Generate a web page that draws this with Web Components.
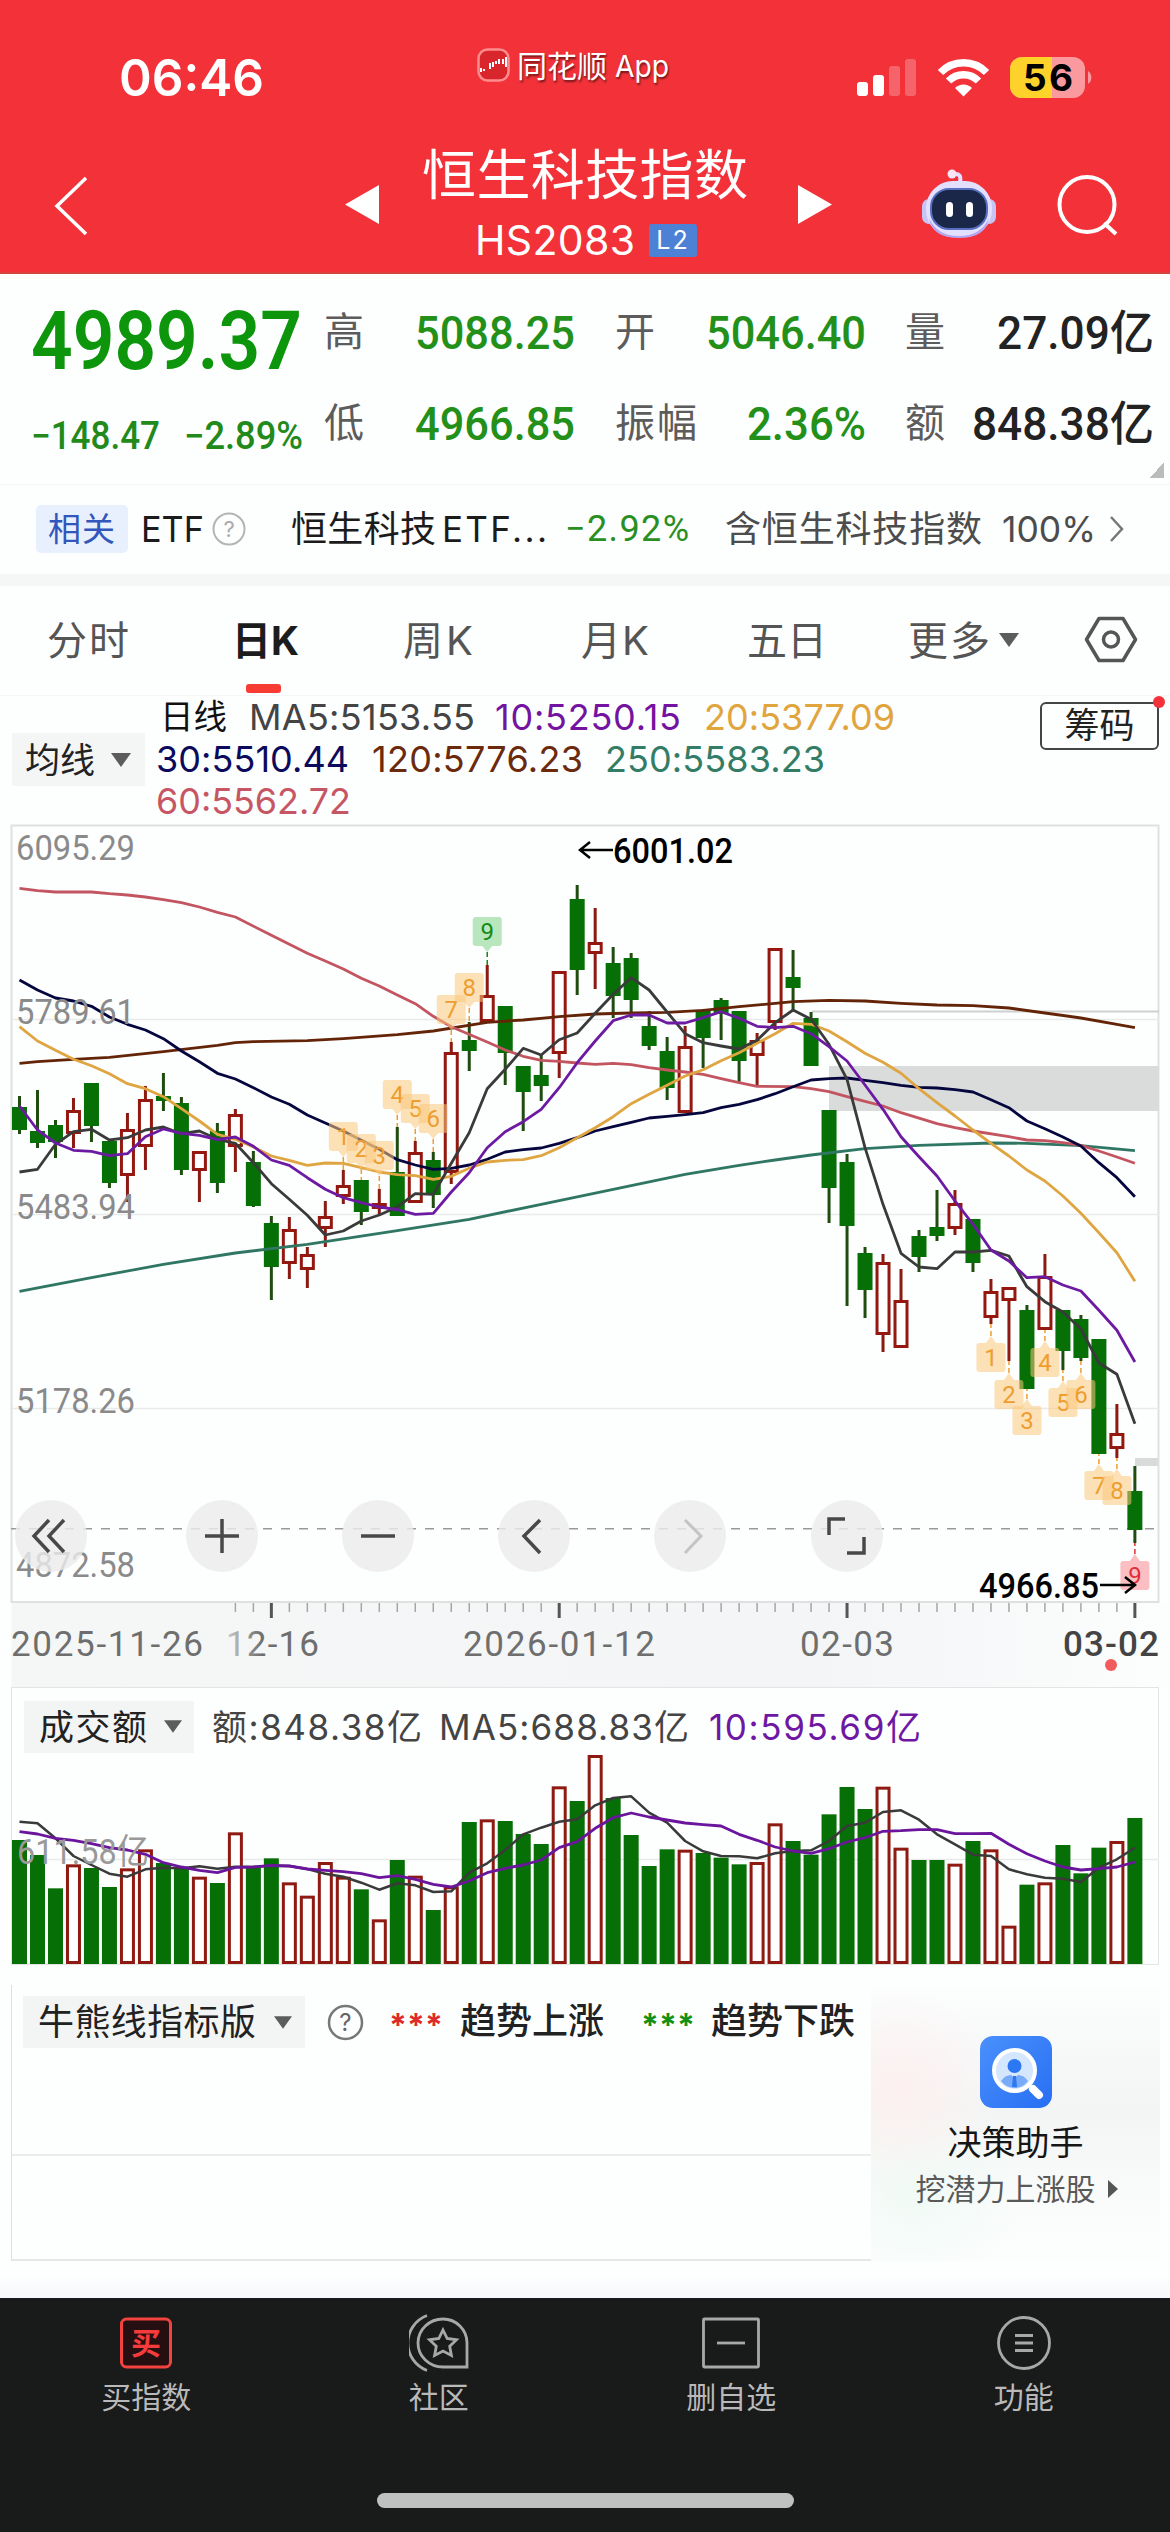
<!DOCTYPE html>
<html lang="zh-CN">
<head>
<meta charset="utf-8">
<title>恒生科技指数</title>
<style>
    body{
        margin: 0;
        background: #fdfefe;
        font-family: 'Inter', 'Noto Sans CJK SC', sans-serif;
        color: #222;
    }
</style>
</head>
<body>
<stock-page></stock-page>

<script>
const NUM = "'Roboto', 'Noto Sans CJK SC', sans-serif"

// text fitted to a given width: spaced out when short, narrowed when long
class FitText extends HTMLElement {
    constructor() {
        super()
        this.attachShadow({ mode: 'open' })
        this.shadowRoot.innerHTML = `
            <style>
                :host{ display: block; flex: none; white-space: nowrap; }
                span{ display: inline-block; transform-origin: 0 50%; }
            </style>
            <span><slot></slot></span>`
    }
    connectedCallback() {
        const w = Number(this.getAttribute('w'))
        const span = this.shadowRoot.querySelector('span')
        const n = this.textContent.length - 1
        const natural = span.getBoundingClientRect().width
        this.style.width = w + 'px'
        if (natural > w) span.style.transform = `scaleX(${w / natural})`
        else if (n > 0) span.style.letterSpacing = (w - natural) / n + 'px'
    }
}

class StatusBar extends HTMLElement {
    constructor() {
        super()
        this.attachShadow({ mode: 'open' })
        this.shadowRoot.innerHTML = `
            <style>
                :host{ display: flex; height: 130px; color: #fff; }
                .time{ margin: 48px 0 0 119px; font-size: 51px; line-height: 60px; font-weight: 600; }
                .mark{ display: flex; margin: 46px 0 0 213px; height: 40px; font-size: 30px; line-height: 40px; text-shadow: 1px 2px 2px #0008; }
                .mark svg{ margin: 2px 7px 0 0; }
                .mark .app{ margin-left: 8px; }
                .signal{ margin: 57px 0 0 187px; overflow: visible; }
            </style>
            <fit-text class="time" w="145">06:46</fit-text>
            <div class="mark">
                <svg width="33" height="34" viewBox="0 0 33 34">
                    <rect x="1.5" y="1.5" width="30" height="31" rx="9" fill="#d9262c" stroke="#ff8d8d" stroke-width="2.5"/>
                    <path d="M4 24v-4M7 23v-2M13 15v6M16 14v5M19 16v-3M22 16v-5M26 11v5M29 9v10" stroke="#fff" stroke-width="2"/>
                </svg>
                <fit-text w="90">同花顺</fit-text>
                <fit-text class="app" w="54">App</fit-text>
            </div>
            <svg class="signal" width="240" height="44" viewBox="0 0 240 44">
                <g fill="#fff">
                    <rect x="1" y="25" width="11" height="14" rx="3"/>
                    <rect x="17" y="18" width="11" height="21" rx="3"/>
                    <rect x="33" y="9" width="11" height="30" rx="3" opacity=".25"/>
                    <rect x="49" y="2" width="11" height="37" rx="3" opacity=".25"/>
                </g>
                <g fill="none" stroke="#fff" stroke-width="7.5">
                    <path d="M84.500 15.500a32 32 0 0 1 46 0"/>
                    <path d="M92.500 24a21 21 0 0 1 30 0"/>
                </g>
                <path d="M99 31a12 12 0 0 1 17 0l-8.500 8.500z" fill="#fff"/>
                <clipPath id="b"><rect x="154" y="0" width="75" height="41" rx="12"/></clipPath>
                <g clip-path="url(#b)">
                    <rect x="154" y="0" width="75" height="41" fill="#fb9a9e"/>
                    <rect x="154" y="0" width="42" height="41" fill="#fdd32b"/>
                </g>
                <path d="M232 14a8 8 0 0 1 0 13z" fill="#fb9a9e"/>
                <text x="167" y="34" font-size="37" font-weight="700" textLength="50">56</text>
            </svg>`
    }
}

class NavBar extends HTMLElement {
    constructor() {
        super()
        this.attachShadow({ mode: 'open' })
        this.shadowRoot.innerHTML = `
            <style>
                :host{ display: flex; height: 142px; color: #fff; }
                .title{ width: 330px; margin-left: 42px; }
                .name{ font-size: 54px; line-height: 80px; margin-top: 6px; }
                .code{ display: flex; height: 40px; margin: 4px 0 0 53px; font-size: 41px; line-height: 40px; align-items: center; }
                .l2{ width: 48px; height: 33px; margin-left: 14px; background: #4c81d6; border-radius: 3px; font-size: 25px; line-height: 33px; text-align: center; letter-spacing: 2px; }
                svg{ flex: none; }
            </style>
            <svg style="margin: 45px 0 0 52px" width="38" height="62" viewBox="0 0 38 62"><path d="M34 3 5 31l29 28" fill="none" stroke="#fff" stroke-width="3.500"/></svg>
            <svg style="margin: 54px 0 0 255px" width="35" height="42" viewBox="0 0 35 42"><path d="M34 1v39L0 20.500z" fill="#fff"/></svg>
            <div class="title">
                <fit-text class="name" w="326">恒生科技指数</fit-text>
                <div class="code"><fit-text w="160">HS2083</fit-text><div class="l2">L2</div></div>
            </div>
            <svg style="margin: 54px 0 0 46px" width="35" height="42" viewBox="0 0 35 42"><path d="M0 1v39l34-19.500z" fill="#fff"/></svg>
            <svg style="margin: 38px 0 0 88px" width="76" height="72" viewBox="0 0 76 72">
                <path d="M39 14q2-9-6-8" fill="none" stroke="#e5e0ff" stroke-width="4"/>
                <circle cx="31" cy="6" r="4.500" fill="#f8e6f4"/>
                <rect x="1" y="31" width="14" height="25" rx="7" fill="#c6c4f4"/>
                <rect x="61" y="31" width="14" height="25" rx="7" fill="#c6c4f4"/>
                <rect x="5" y="13" width="66" height="56" rx="27" fill="#e3e0ff"/>
                <path d="M8 50q8 18 30 18t30-18q-3 20-30 20T8 50" fill="#b5a6f2"/>
                <rect x="10" y="21" width="56" height="40" rx="18" fill="#1b2748" stroke="#566fc0" stroke-width="2"/>
                <rect x="25" y="34" width="7" height="15" rx="3.500" fill="#fff"/>
                <rect x="45" y="34" width="7" height="15" rx="3.500" fill="#fff"/>
            </svg>
            <svg style="margin: 44px 0 0 60px" width="64" height="64" viewBox="0 0 64 64"><circle cx="30" cy="30.500" r="27.500" fill="none" stroke="#fff" stroke-width="4"/><path d="m47 49 12 11" stroke="#fff" stroke-width="4"/></svg>`
    }
}

class QuotePanel extends HTMLElement {
    constructor() {
        super()
        this.attachShadow({ mode: 'open' })
        this.shadowRoot.innerHTML = `
            <style>
                :host{ display: flex; height: 210px; border-top: 2px solid #d7423f; border-bottom: 1px solid #f4f6f6; font-family: ${NUM}; }
                .main{ width: 270px; margin-left: 31px; color: #0d960c; }
                .price{ font-size: 82px; line-height: 96px; font-weight: 600; margin-top: 19px; }
                .chg{ display: flex; gap: 24px; margin-top: 25px; font-size: 38px; line-height: 44px; font-weight: 500; color: #22891b; }
                .grid{
                    display: grid;
                    flex: 1;
                    grid-template-columns: 251px 40px 249px 41px 249px;
                    grid-template-rows: 91px 91px;
                    margin: 13px 0 0 23px;
                }
                .cell{ display: flex; justify-content: space-between; align-items: center; grid-column: span 2; width: 251px; }
                .cell.last{ grid-column: auto; width: 249px; }
                .cell fit-text{ font-size: 47px; line-height: 60px; font-weight: 500; color: #23901a; }
                .cell .l{ font-size: 40px; font-weight: 400; color: #5c5c5c; }
                .cell .d{ color: #222; }
                .fold{ width: 14px; height: 16px; align-self: flex-end; margin: 0 6px 6px -26px; background: linear-gradient(to bottom right, #0000 50%, #bbb 50%); }
            </style>
            <div class="main">
                <fit-text class="price" w="271">4989.37</fit-text>
                <div class="chg"><fit-text w="129">−148.47</fit-text><fit-text w="119">−2.89%</fit-text></div>
            </div>
            <div class="grid">
                <div class="cell"><fit-text class="l" w="40">高</fit-text><fit-text w="160">5088.25</fit-text></div>
                <div class="cell"><fit-text class="l" w="40">开</fit-text><fit-text w="160">5046.40</fit-text></div>
                <div class="cell last"><fit-text class="l" w="40">量</fit-text><fit-text class="d" w="157">27.09亿</fit-text></div>
                <div class="cell"><fit-text class="l" w="40">低</fit-text><fit-text w="160">4966.85</fit-text></div>
                <div class="cell"><fit-text class="l" w="82">振幅</fit-text><fit-text w="119">2.36%</fit-text></div>
                <div class="cell last"><fit-text class="l" w="40">额</fit-text><fit-text class="d" w="182">848.38亿</fit-text></div>
            </div>
            <div class="fold"></div>`
    }
}

class RelatedRow extends HTMLElement {
    constructor() {
        super()
        this.attachShadow({ mode: 'open' })
        this.shadowRoot.innerHTML = `
            <style>
                :host{ display: flex; height: 101px; padding: 0 0 2px 36px; box-sizing: border-box; align-items: center; font-size: 36px; line-height: 48px; color: #1b1b1b; border-bottom: 12px solid #f5f7f7; }
                .chip{ width: 80px; height: 48px; padding-left: 12px; border-radius: 5px; background: #e8f0fe; color: #3157bd; font-size: 33px; }
                .n{ font-family: ${NUM}; color: #2a8f22; }
                .g{ color: #4c4c4c; }
            </style>
            <div class="chip"><fit-text w="67">相关</fit-text></div>
            <fit-text w="63" style="margin-left: 13px">ETF</fit-text>
            <svg style="margin-left: 8px" width="34" height="34" viewBox="0 0 34 34"><circle cx="17" cy="17" r="15.500" fill="none" stroke="#b4b4b4" stroke-width="2"/><text x="17" y="25" font-size="22" text-anchor="middle" fill="#aaa">?</text></svg>
            <fit-text w="145" style="margin-left: 45px">恒生科技</fit-text>
            <fit-text w="105" style="margin-left: 6px; font-size: 35px">ETF...</fit-text>
            <fit-text class="n" w="124" style="margin-left: 18px">−2.92%</fit-text>
            <fit-text class="g" w="257" style="margin-left: 36px">含恒生科技指数</fit-text>
            <fit-text class="g" w="94" style="margin-left: 20px">100%</fit-text>
            <svg style="margin-left: 12px" width="18" height="30" viewBox="0 0 18 30"><path d="m3 3 11 12L3 27" fill="none" stroke="#777" stroke-width="2.500"/></svg>`
    }
}

class PeriodTabs extends HTMLElement {
    constructor() {
        super()
        this.attachShadow({ mode: 'open' })
        this.shadowRoot.innerHTML = `
            <style>
                :host{ display: flex; height: 109px; font-size: 40px; line-height: 110px; color: #555; border-bottom: 1px solid #f5f6f6; }
                .on{ color: #1c1c1c; font-weight: 700; width: 68px; }
                .on i{ display: block; width: 35px; height: 9px; margin: -12px 0 0 14px; border-radius: 3px; background: #f73c34; }
            </style>
            <fit-text w="82" style="margin-left: 47px">分时</fit-text>
            <div class="on" style="margin-left: 103px"><fit-text w="67">日K</fit-text><i></i></div>
            <fit-text w="70" style="margin-left: 103px">周K</fit-text>
            <fit-text w="68" style="margin-left: 108px">月K</fit-text>
            <fit-text w="80" style="margin-left: 98px">五日</fit-text>
            <fit-text w="82" style="margin-left: 81px">更多</fit-text>
            <svg style="margin: 47px 0 0 9px" width="20" height="14" viewBox="0 0 20 14"><path d="M0 0h20l-10 14z" fill="#5c5c5c"/></svg>
            <svg style="margin: 30px 0 0 65px" width="54" height="47" viewBox="0 0 54 47"><path d="M15 2.500h24L51.500 23.500 39 44.500H15L2.500 23.500z" fill="none" stroke="#555" stroke-width="3.500" stroke-linejoin="round"/><circle cx="27" cy="23.500" r="7.500" fill="none" stroke="#555" stroke-width="3.500"/></svg>`
    }
}

class MaLegend extends HTMLElement {
    constructor() {
        super()
        this.attachShadow({ mode: 'open' })
        this.shadowRoot.innerHTML = `
            <style>
                :host{ display: flex; height: 129px; font-size: 36px; line-height: 42px; }
                .chip{ display: flex; width: 133px; height: 53px; margin: 37px 11px 0 12px; padding-left: 13px; box-sizing: border-box; background: #f4f6f6; align-items: center; font-size: 35px; }
                .rows{ flex: 1; }
                .row{ display: flex; gap: 23px; }
                .btn{ width: 115px; height: 44px; margin: 6px 11px 0 0; border: 2px solid #444; border-radius: 6px; color: #222; font-size: 35px; line-height: 43px; text-align: center; position: relative; }
                .btn i{ position: absolute; right: -8px; top: -8px; width: 12px; height: 12px; border-radius: 50%; background: #f33139; }
            </style>
            <div class="chip"><fit-text w="70">均线</fit-text><svg style="margin-left: 16px" width="20" height="14" viewBox="0 0 20 14"><path d="M0 0h20l-10 14z" fill="#5c5c5c"/></svg></div>
            <div class="rows">
                <div class="row" style="padding-left: 4px"><fit-text w="67" style="color: #111; font-size: 34px">日线</fit-text><fit-text w="226" style="color: #444; margin-left: -1px">MA5:5153.55</fit-text><fit-text w="186" style="color: #73139f; margin-left: -3px">10:5250.15</fit-text><fit-text w="191" style="color: #e0a53c">20:5377.09</fit-text></div>
                <div class="row"><fit-text w="193" style="color: #0b0a5c">30:5510.44</fit-text><fit-text w="211" style="color: #6b2a0c">120:5776.23</fit-text><fit-text w="220" style="color: #337d66; margin-left: -1px">250:5583.23</fit-text></div>
                <div class="row"><fit-text w="195" style="color: #c75664">60:5562.72</fit-text></div>
            </div>
            <div class="btn">筹码<i></i></div>`
    }
}

const X0 = 19.5
const STEP = 17.99
const COL = { ma5: '#3a3a3a', ma10: '#6d1aa3', ma20: '#dfa540', ma30: '#06063f', ma60: '#c35561', ma120: '#632408', ma250: '#2f7763' }

// kind, high, body top, body bottom, low
const candles = `G 1095 1106 1129 1133|G 1089 1130 1142 1147|G 1119 1124 1141 1157|R 1097 1109 1133 1147|G 1082 1082 1125 1141
G 1139 1140 1182 1187|R 1112 1128 1175 1201|R 1085 1098 1146 1169|G 1072 1095 1100 1110|G 1096 1102 1169 1174
R 1150 1150 1170 1201|G 1122 1130 1182 1192|R 1108 1113 1146 1171|G 1150 1161 1205 1206|G 1215 1222 1266 1299
R 1216 1228 1263 1278|R 1246 1253 1269 1287|R 1200 1215 1228 1246|R 1169 1184 1196 1203|G 1179 1179 1211 1224
R 1188 1202 1208 1213|G 1126 1171 1215 1215|R 1140 1151 1202 1202|G 1151 1159 1194 1207|R 1041 1051 1172 1183
G 1021 1039 1050 1070|R 964 994 1021 1021|G 1005 1005 1052 1084|G 1065 1065 1091 1130|G 1053 1074 1085 1100
R 970 970 1053 1077|G 884 898 969 994|R 907 941 953 988|G 946 962 995 1017|G 952 957 999 1017
G 1010 1025 1045 1049|G 1036 1050 1087 1099|R 1025 1045 1112 1112|G 1008 1010 1037 1067|G 997 999 1013 1039
G 1010 1010 1060 1082|R 1032 1039 1055 1085|R 947 947 1022 1029|G 949 976 987 1009|G 1011 1017 1065 1065
G 1109 1109 1187 1222|G 1153 1161 1225 1305|G 1246 1252 1289 1317|R 1253 1261 1334 1351|R 1268 1299 1347 1347
G 1229 1235 1256 1271|G 1189 1226 1235 1240|R 1189 1202 1228 1234|G 1218 1218 1262 1271|R 1278 1290 1317 1323
R 1286 1286 1300 1360|G 1304 1309 1388 1388|R 1253 1275 1329 1329|G 1309 1309 1350 1369|G 1314 1318 1357 1360
G 1338 1338 1453 1453|R 1403 1432 1448 1457|G 1465 1490 1529 1542`.split(/[|\n]/).map(s => {
    const [k, ...v] = s.split(' ')
    return [k, ...v.map(Number)]
})

// sub-pixel heights (thirds), one per candle; "i:y" pairs skip candles
const lines = {
    ma250: '0:1441 4:1400 8:1360 12:1326 16:1300 21:1259 25:1225 29:1180 33:1135 37:1090 40:1063 42:1047 44:1032 47:1013 50:1003 54:996 56:997 59:1004 62:1019',
    ma120: '0:757 1:752 3:745 5:739 8:722 11:703 12:695 13:692 16:689 18:683 21:671 23:660 26:634 28:627 30:617 32:609 34:606 36:604 38:598 40:587 42:577 43:572 45:568 47:570 49:577 51:582 53:584 55:591 57:606 59:621 61:640 62:650',
    ma60: '0:232 1:239 2:243 4:243 5:248 6:252 7:258 8:266 9:275 10:288 11:304 12:318 14:373 16:427 17:450 18:474 19:502 20:525 21:552 22:578 23:616 24:647 26:693 27:717 28:736 29:748 30:751 31:756 32:760 33:757 34:761 35:770 36:777 37:783 38:790 39:803 40:815 41:826 43:827 44:833 45:842 46:857 47:871 48:885 49:905 51:938 52:950 53:960 55:977 56:987 57:989 58:995 59:1003 60:1020 61:1038 62:1057',
    ma30: '507 537 561 570 586 618 640 657 683 720 752 787 804 830 858 880 912 936 960 988 1015 1046 1062 1075 1072 1062 1045 1023 1016 1011 997 980 960 947 934 921 916 911 905 890 880 866 848 827 807 803 801 808 815 823 829 831 836 843 866 890 930 953 978 1005 1055 1100 1157',
    ma20: '647 690 718 745 764 788 818 833 857 893 930 970 985 1008 1035 1048 1063 1056 1057 1070 1083 1091 1094 1105 1096 1072 1053 1048 1046 1034 1010 980 950 917 878 850 823 795 776 749 725 697 668 637 640 660 692 727 754 787 833 875 915 957 997 1035 1077 1110 1155 1207 1265 1325 1411',
    ma5: '1083 1075 1000 962 955 987 980 957 948 968 960 985 997 1055 1118 1165 1213 1272 1260 1230 1212 1188 1148 1150 1057 965 833 775 712 732 686 666 607 550 500 537 603 668 695 705 714 688 635 597 625 700 805 1010 1180 1327 1368 1373 1323 1323 1318 1335 1427 1472 1503 1554 1656 1690 1838',
    ma10: '885 957 996 1018 1021 1034 1028 977 954 967 973 986 978 1006 1047 1063 1100 1135 1160 1175 1188 1196 1210 1207 1143 1085 1010 962 932 895 830 755 690 629 612 612 636 636 620 602 622 646 650 646 668 707 750 822 895 977 1037 1095 1170 1240 1317 1350 1400 1397 1422 1440 1498 1558 1653'
}

const tags = [
    [18, 1, 1121], [19, 2, 1133], [20, 3, 1140], [21, 4, 1079], [22, 5, 1093], [23, 6, 1103], [24, 7, 994], [25, 8, 972], [26, 9, 916],
    [54, 1, 1342], [55, 2, 1379], [56, 3, 1405], [57, 4, 1347], [58, 5, 1387], [59, 6, 1379], [60, 7, 1470], [61, 8, 1475], [62, 9, 1560]
]

const cx = i => X0 + i * STEP

function polyline(src, dy, color, w) {
    const pts = src.split(' ').map((s, i) => {
        const p = s.includes(':') ? s.split(':').map(Number) : [i, Number(s)]
        return `${cx(p[0]).toFixed(1)},${(p[1] / 3 + dy).toFixed(1)}`
    })
    return `<polyline points="${pts.join(' ')}" fill="none" stroke="${color}" stroke-width="${w}" stroke-linejoin="round"/>`
}

class KlineChart extends HTMLElement {
    constructor() {
        super()
        this.attachShadow({ mode: 'open' })
        this.shadowRoot.innerHTML = `
            <style>
                :host{ display: block; height: 778px; position: relative; font-family: ${NUM}; }
                svg{ display: block; overflow: visible; }
                .tools{ position: absolute; left: 0; top: 675px; display: flex; padding-left: 15px; }
            </style>
            <svg width="1170" height="778" viewBox="0 824 1170 778">${this.draw()}</svg>
            <div class="tools">
                <tool-button><path d="M34 20 19 36l15 16M49 20 34 36l15 16"/></tool-button>
                <tool-button style="margin-left: 99px"><path d="M19 36h34M36 19v34"/></tool-button>
                <tool-button style="margin-left: 84px"><path d="M19 36h34"/></tool-button>
                <tool-button style="margin-left: 84px"><path d="M42 20 26 36l16 17"/></tool-button>
                <tool-button style="margin-left: 84px" off><path d="m31 20 16 16-16 17"/></tool-button>
                <tool-button style="margin-left: 85px"><path d="M18 35V19h16M53 37v16H36"/></tool-button>
            </div>`
    }
    draw() {
        let s = `<path d="M11.500 824.500h1147V1601H11.500z" fill="none" stroke="#dfe1e1" stroke-width="2"/>
            <path d="M12 1018.500h1147M12 1213.500h1147M12 1407.500h1147" stroke="#e9ebeb" stroke-width="1.500"/>
            <path d="M812 1010.500h347" stroke="#cfcfcf" stroke-width="2"/>
            <rect x="829" y="1065" width="330" height="45" fill="#dadbdb"/>
            <rect x="1135" y="1457" width="23" height="8" fill="#d9dada"/>
            <path d="M11 1527.700h1147" stroke="#999" stroke-width="1.500" stroke-dasharray="9 9"/>`
        candles.forEach(([k, hi, top, bot, lo], i) => {
            const x = cx(i)
            if (k == 'G') {
                s += `<path d="M${x} ${hi}V${lo}" stroke="#1f4d10" stroke-width="3"/>
                    <rect x="${x - 7.5}" y="${top}" width="15" height="${bot - top}" fill="#066f05"/>`
            } else {
                s += `<path d="M${x} ${hi}V${top}M${x} ${bot}V${lo}" stroke="#8b1a12" stroke-width="3"/>
                    <rect x="${x - 6}" y="${top + 1.5}" width="12" height="${bot - top - 3}" fill="#fff" stroke="#941810" stroke-width="3"/>`
            }
        })
        for (const k in lines) s += polyline(lines[k], 810, COL[k], 2.8)
        tags.forEach(([i, n, y]) => {
            const x = cx(i)
            const up = i < 40
            const edge = up ? y + 35 : y - 7
            const fill = n < 9 ? '#fbc97c' : up ? '#7fd287' : '#f98b92'
            const ink = n < 9 ? '#ee9d2e' : up ? '#128a16' : '#e02f35'
            s += `<path d="M${x} ${edge}V${up ? candles[i][1] : candles[i][4]}" stroke="${ink}" stroke-width="1.500" stroke-dasharray="5 3"/>
                <path d="${up ? `M${x - 5} ${y + 29}h10l-5 6z` : `M${x - 5} ${y}h10l-5 -7z`}" fill="${fill}" opacity=".55"/>
                <rect x="${x - 14.5}" y="${y}" width="29" height="29" rx="3" fill="${fill}" opacity=".55"/>
                <text x="${x}" y="${y + 23}" font-size="24" text-anchor="middle" fill="${ink}">${n}</text>`
        })
        const prices = [[6095.29, 859], [5789.61, 1023], [5483.94, 1217.5], [5178.26, 1412], [4872.58, 1576]]
        prices.forEach(([p, y]) => {
            s += `<text x="16" y="${y}" font-size="35" textLength="119" lengthAdjust="spacingAndGlyphs" fill="#8a8a8a">${p}</text>`
        })
        return s + `<g fill="none" stroke="#000" stroke-width="2.500"><path d="M613 849h-33M590 841l-10 8 10 8M1100 1584h34M1125 1576l10 8-10 8"/></g>
            <text x="613" y="862" font-size="35" font-weight="500" textLength="120" lengthAdjust="spacingAndGlyphs">6001.02</text>
            <text x="979" y="1597" font-size="35" font-weight="500" textLength="120" lengthAdjust="spacingAndGlyphs">4966.85</text>`
    }
}

// the icon is drawn from path children, on a 72px disc
class ToolButton extends HTMLElement {
    constructor() {
        super()
        this.attachShadow({ mode: 'open' })
        const d = this.querySelector('path').getAttribute('d')
        this.shadowRoot.innerHTML = `
            <style>
                :host{ display: block; width: 72px; height: 72px; border-radius: 50%; background: #ebebebd0; }
                path{ fill: none; stroke: #484848; stroke-width: 3.500; }
                :host([off]) path{ stroke: #c4c4c4; stroke-width: 3; }
            </style>
            <svg width="72" height="72" viewBox="0 0 72 72"><path d="${d}"/></svg>`
    }
}

class DateAxis extends HTMLElement {
    constructor() {
        super()
        this.attachShadow({ mode: 'open' })
        let t = ''
        for (let i = 12; i < 63; i++) {
            const big = i % 16 == 14
            t += `<path d="M${cx(i)} 0v${big ? 15 : 9}" stroke="${big ? '#555' : '#a5a5a5'}" stroke-width="${big ? 3 : 1.5}"/>`
        }
        this.shadowRoot.innerHTML = `
            <style>
                :host{ display: block; height: 84px; background: linear-gradient(90deg, #fdfefe 11px, #f5f7f7 12px, #f3f5f6 70%, #fcfdfd); font-family: ${NUM}; }
                svg{ display: block; }
            </style>
            <svg width="1170" height="84" viewBox="0 0 1170 84" font-size="35" fill="#6e6e6e">
                <linearGradient id="f" gradientUnits="userSpaceOnUse" x1="222" x2="262"><stop stop-color="#d5d5d5"/><stop offset="1" stop-color="#6e6e6e"/></linearGradient>
                ${t}
                <text x="11" y="52.500" textLength="192">2025-11-26</text>
                <text x="226" y="52.500" textLength="93" fill="url(#f)">12-16</text>
                <text x="463" y="52.500" textLength="192">2026-01-12</text>
                <text x="800" y="52.500" textLength="94">02-03</text>
                <text x="1063" y="52.500" textLength="96" font-weight="500" fill="#444">03-02</text>
                <circle cx="1111" cy="62" r="6" fill="#f15b5b"/>
            </svg>`
    }
}

const vols = [507, 552, 652, 580, 591, 648, 592, 535, 576, 592, 617, 636, 484, 590, 562, 634, 674, 573, 617, 655, 745, 567, 614, 717, 646, 453, 445, 450, 489, 519, 346, 390, 252, 381, 492, 585, 535, 536, 546, 560, 580, 573, 457, 510, 551, 430, 348, 414, 347, 530, 567, 567, 578, 510, 535, 764, 641, 634, 522, 607, 530, 510, 441]
const vol5 = '452 457 502 555 582 608 617 595 590 592 586 593 587 588 584 585 594 608 617 635 656 637 643 663 661 605 577 537 490 470 452 445 403 381 376 425 455 510 541 555 556 562 547 540 538 510 465 455 423 418 446 490 520 551 555 595 610 620 623 633 590 565 530'
const vol10 = '482 489 502 508 518 530 537 550 575 588 598 605 589 588 583 585 594 598 602 608 620 614 625 640 648 630 605 592 582 567 530 512 472 440 426 438 447 456 461 465 490 508 528 540 547 533 513 500 481 479 476 476 488 488 487 520 548 570 588 597 593 588 573'

class VolumePanel extends HTMLElement {
    constructor() {
        super()
        this.attachShadow({ mode: 'open' })
        let s = ''
        vols.forEach((v, i) => {
            const x = cx(i)
            const y = v / 3 + 1670
            if (candles[i][0] == 'G') s += `<rect x="${x - 7.5}" y="${y}" width="15" height="${1963 - y}" fill="#066f05"/>`
            else s += `<rect x="${x - 6}" y="${y + 1.5}" width="12" height="${1960 - y}" fill="#fff" stroke="#8f1a12" stroke-width="3"/>`
        })
        this.shadowRoot.innerHTML = `
            <style>
                :host{ display: block; height: 278px; box-sizing: border-box; margin: 0 11px; border: 1px solid #e3e5e5; }
                .head{ display: flex; height: 70px; padding-top: 7px; box-sizing: border-box; align-items: center; font-size: 35px; line-height: 50px; color: #444; }
                .chip{ display: flex; align-items: center; width: 170px; height: 52px; margin-left: 12px; padding-left: 15px; box-sizing: border-box; background: #f3f5f5; color: #222; font-size: 35px; }
                svg{ display: block; overflow: visible; }
                .bars{ margin: -1px 0 0 -12px; }
            </style>
            <div class="head">
                <div class="chip"><fit-text w="108">成交额</fit-text><svg style="margin-left: 17px" width="18" height="13" viewBox="0 0 20 14"><path d="M0 0h20l-10 14z" fill="#5c5c5c"/></svg></div>
                <fit-text w="210" style="margin-left: 18px">额:848.38亿</fit-text>
                <fit-text w="250" style="margin-left: 17px">MA5:688.83亿</fit-text>
                <fit-text w="212" style="margin-left: 20px; color: #6d17a3">10:595.69亿</fit-text>
            </div>
            <svg class="bars" width="1170" height="207" viewBox="0 1756 1170 207">
                <path d="M12 1858.500h1147" stroke="#e9ebeb" stroke-width="1.500"/>
                ${s}
                ${polyline(vol5, 1670, COL.ma5, 2.5)}
                ${polyline(vol10, 1670, '#6a159c', 2.8)}
                <text x="17" y="1863" font-size="35" font-family="Roboto, 'Noto Sans CJK SC', sans-serif" textLength="132" lengthAdjust="spacingAndGlyphs" fill="#999">611.58亿</text>
            </svg>`
    }
}

class TrendPanel extends HTMLElement {
    constructor() {
        super()
        this.attachShadow({ mode: 'open' })
        this.shadowRoot.innerHTML = `
            <style>
                :host{ display: flex; height: 276px; margin: 20px 10px 0 11px; }
                .left{ width: 860px; box-sizing: border-box; border-left: 1px solid #dfe1e1; border-bottom: 2px solid #e6e8e8; }
                .head{ display: flex; height: 169px; align-items: flex-start; border-bottom: 2px solid #ebeded; font-size: 36px; line-height: 52px; color: #222; }
                .head > *{ margin-top: 11px; }
                .chip{ display: flex; align-items: center; width: 282px; height: 52px; margin-left: 11px; padding-left: 15px; box-sizing: border-box; background: #f3f5f5; }
                .b{ font-weight: 500; }
                .star{ font-size: 32px; font-weight: 700; padding-top: 4px; }
                .card{
                    flex: 1;
                    display: flex;
                    flex-direction: column;
                    align-items: center;
                    background: radial-gradient(circle at 10% 38%, #fdf0f0, #fdf0f000 32%), radial-gradient(circle at 15% 72%, #f0faf5, #f0faf500 35%), linear-gradient(#fcfdfd, #f3f5f5 45%, #fafcfc 80%, #fcfdfd);
                }
                .card .a{ font-size: 34px; line-height: 46px; margin-top: 12px; color: #161616; }
                .card .c{ display: flex; align-items: center; margin: 2px 0 0 2px; font-size: 30px; line-height: 42px; color: #595959; }
                svg{ flex: none; }
            </style>
            <div class="left">
                <div class="head">
                    <div class="chip"><fit-text w="218">牛熊线指标版</fit-text><svg style="margin-left: 18px" width="18" height="13" viewBox="0 0 20 14"><path d="M0 0h20l-10 14z" fill="#5c5c5c"/></svg></div>
                    <svg style="margin: 19px 0 0 22px" width="37" height="37" viewBox="0 0 37 37"><circle cx="18.500" cy="18.500" r="16.500" fill="none" stroke="#777" stroke-width="2.500"/><text x="18.500" y="27" font-size="24" text-anchor="middle" fill="#666">?</text></svg>
                    <fit-text class="star" w="54" style="margin-left: 25px; color: #df2b27">***</fit-text>
                    <fit-text class="b" w="144" style="margin: 10px 0 0 17px">趋势上涨</fit-text>
                    <fit-text class="star" w="54" style="margin-left: 37px; color: #149014">***</fit-text>
                    <fit-text class="b" w="144" style="margin: 10px 0 0 16px">趋势下跌</fit-text>
                </div>
            </div>
            <div class="card">
                <svg style="margin-top: 51px" width="72" height="72" viewBox="0 0 72 72">
                    <linearGradient id="g" x1="0" x2="1" y1="0" y2="1"><stop stop-color="#4a90fc"/><stop offset="1" stop-color="#276ff3"/></linearGradient>
                    <rect width="72" height="72" rx="13" fill="url(#g)"/>
                    <path d="m53 53 6 6" stroke="#fff" stroke-width="8" stroke-linecap="round"/>
                    <circle cx="34.500" cy="34.500" r="20.500" fill="#d5e7ff" stroke="#fff" stroke-width="4"/>
                    <circle cx="34.500" cy="30" r="7" fill="#2c77f4"/>
                    <path d="M21 45q4-6 10-6l3.500 3 3.500-3q6 0 10 6-5 7-13.500 7T21 45" fill="#78abf9"/>
                    <path d="m33 40-1 11h5l-1-11z" fill="#2c77f4"/>
                </svg>
                <fit-text class="a" w="136">决策助手</fit-text>
                <div class="c"><fit-text w="180">挖潜力上涨股</fit-text><svg style="margin-left: 12px" width="10" height="18" viewBox="0 0 10 18"><path d="M0 0v18l10-9z" fill="#555"/></svg></div>
            </div>`
    }
}

class TabItem extends HTMLElement {
    constructor() {
        super()
        this.attachShadow({ mode: 'open' })
        this.shadowRoot.innerHTML = `
            <style>
                :host{ display: flex; flex-direction: column; align-items: center; flex: 1; font-size: 30px; line-height: 40px; color: #b9b9b9; padding-top: 15px; }
                div{ height: 60px; margin-bottom: 4px; }
            </style>
            <div><slot name="icon"></slot></div>
            <slot></slot>`
    }
}

class BottomBar extends HTMLElement {
    constructor() {
        super()
        this.attachShadow({ mode: 'open' })
        this.shadowRoot.innerHTML = `
            <style>
                :host{ display: block; height: 234px; background: #191a1a; }
                nav{ display: flex; height: 195px; }
                .home{ width: 417px; height: 15px; margin: 0 auto; border-radius: 8px; background: #bfc0c0; }
                g{ fill: none; stroke: #a8a8a8; stroke-width: 2.800; }
            </style>
            <nav>
                <tab-item><svg slot="icon" width="60" height="60" viewBox="0 0 60 60"><rect x="5.500" y="6" width="49" height="48" rx="5" fill="#260f10" stroke="#f2433f" stroke-width="3"/><text x="30" y="41" font-size="30" font-weight="700" text-anchor="middle" fill="#f53b3c">买</text></svg>买指数</tab-item>
                <tab-item><svg slot="icon" width="60" height="60" viewBox="2 0 60 60"><g><path d="M36 6a25 24 0 1 0 0 48h24V30A24 24 0 0 0 36 6zM20 2.500a30 29.500 0 0 0 0 55"/><path d="m36 17 4.200 8.500 9.300 1.300-6.800 6.500 1.700 9.200-8.400-4.500-8.400 4.500 1.700-9.200-6.800-6.500 9.300-1.300z"/></g></svg>社区</tab-item>
                <tab-item><svg slot="icon" width="60" height="60" viewBox="0 0 60 60"><g><rect x="2.500" y="6" width="55" height="48" rx="1"/><path d="M16 30h28"/></g></svg>删自选</tab-item>
                <tab-item><svg slot="icon" width="60" height="60" viewBox="0 0 60 60"><g><circle cx="30" cy="30" r="25.500"/><path d="M21 22.500h18M21 30h18M21 37.500h18"/></g></svg>功能</tab-item>
            </nav>
            <div class="home"></div>`
    }
}

class StockPage extends HTMLElement {
    constructor() {
        super()
        this.attachShadow({ mode: 'open' })
        this.shadowRoot.innerHTML = `
            <style>
                :host{ display: block; width: 1170px; height: 2532px; overflow: hidden; }
                .top{ background: #f23139; height: 272px; }
                .gap{ height: 37px; background: linear-gradient(#fdfefe 40%, #f6f8fb); }
            </style>
            <div class="top"><status-bar></status-bar><nav-bar></nav-bar></div>
            <quote-panel></quote-panel>
            <related-row></related-row>
            <period-tabs></period-tabs>
            <ma-legend></ma-legend>
            <kline-chart></kline-chart>
            <date-axis></date-axis>
            <volume-panel></volume-panel>
            <trend-panel></trend-panel>
            <div class="gap"></div>
            <bottom-bar></bottom-bar>`
    }
}

customElements.define('fit-text', FitText)
customElements.define('tool-button', ToolButton)
customElements.define('tab-item', TabItem)
customElements.define('status-bar', StatusBar)
customElements.define('nav-bar', NavBar)
customElements.define('quote-panel', QuotePanel)
customElements.define('related-row', RelatedRow)
customElements.define('period-tabs', PeriodTabs)
customElements.define('ma-legend', MaLegend)
customElements.define('kline-chart', KlineChart)
customElements.define('date-axis', DateAxis)
customElements.define('volume-panel', VolumePanel)
customElements.define('trend-panel', TrendPanel)
customElements.define('bottom-bar', BottomBar)
customElements.define('stock-page', StockPage)
</script>
</body>
</html>
